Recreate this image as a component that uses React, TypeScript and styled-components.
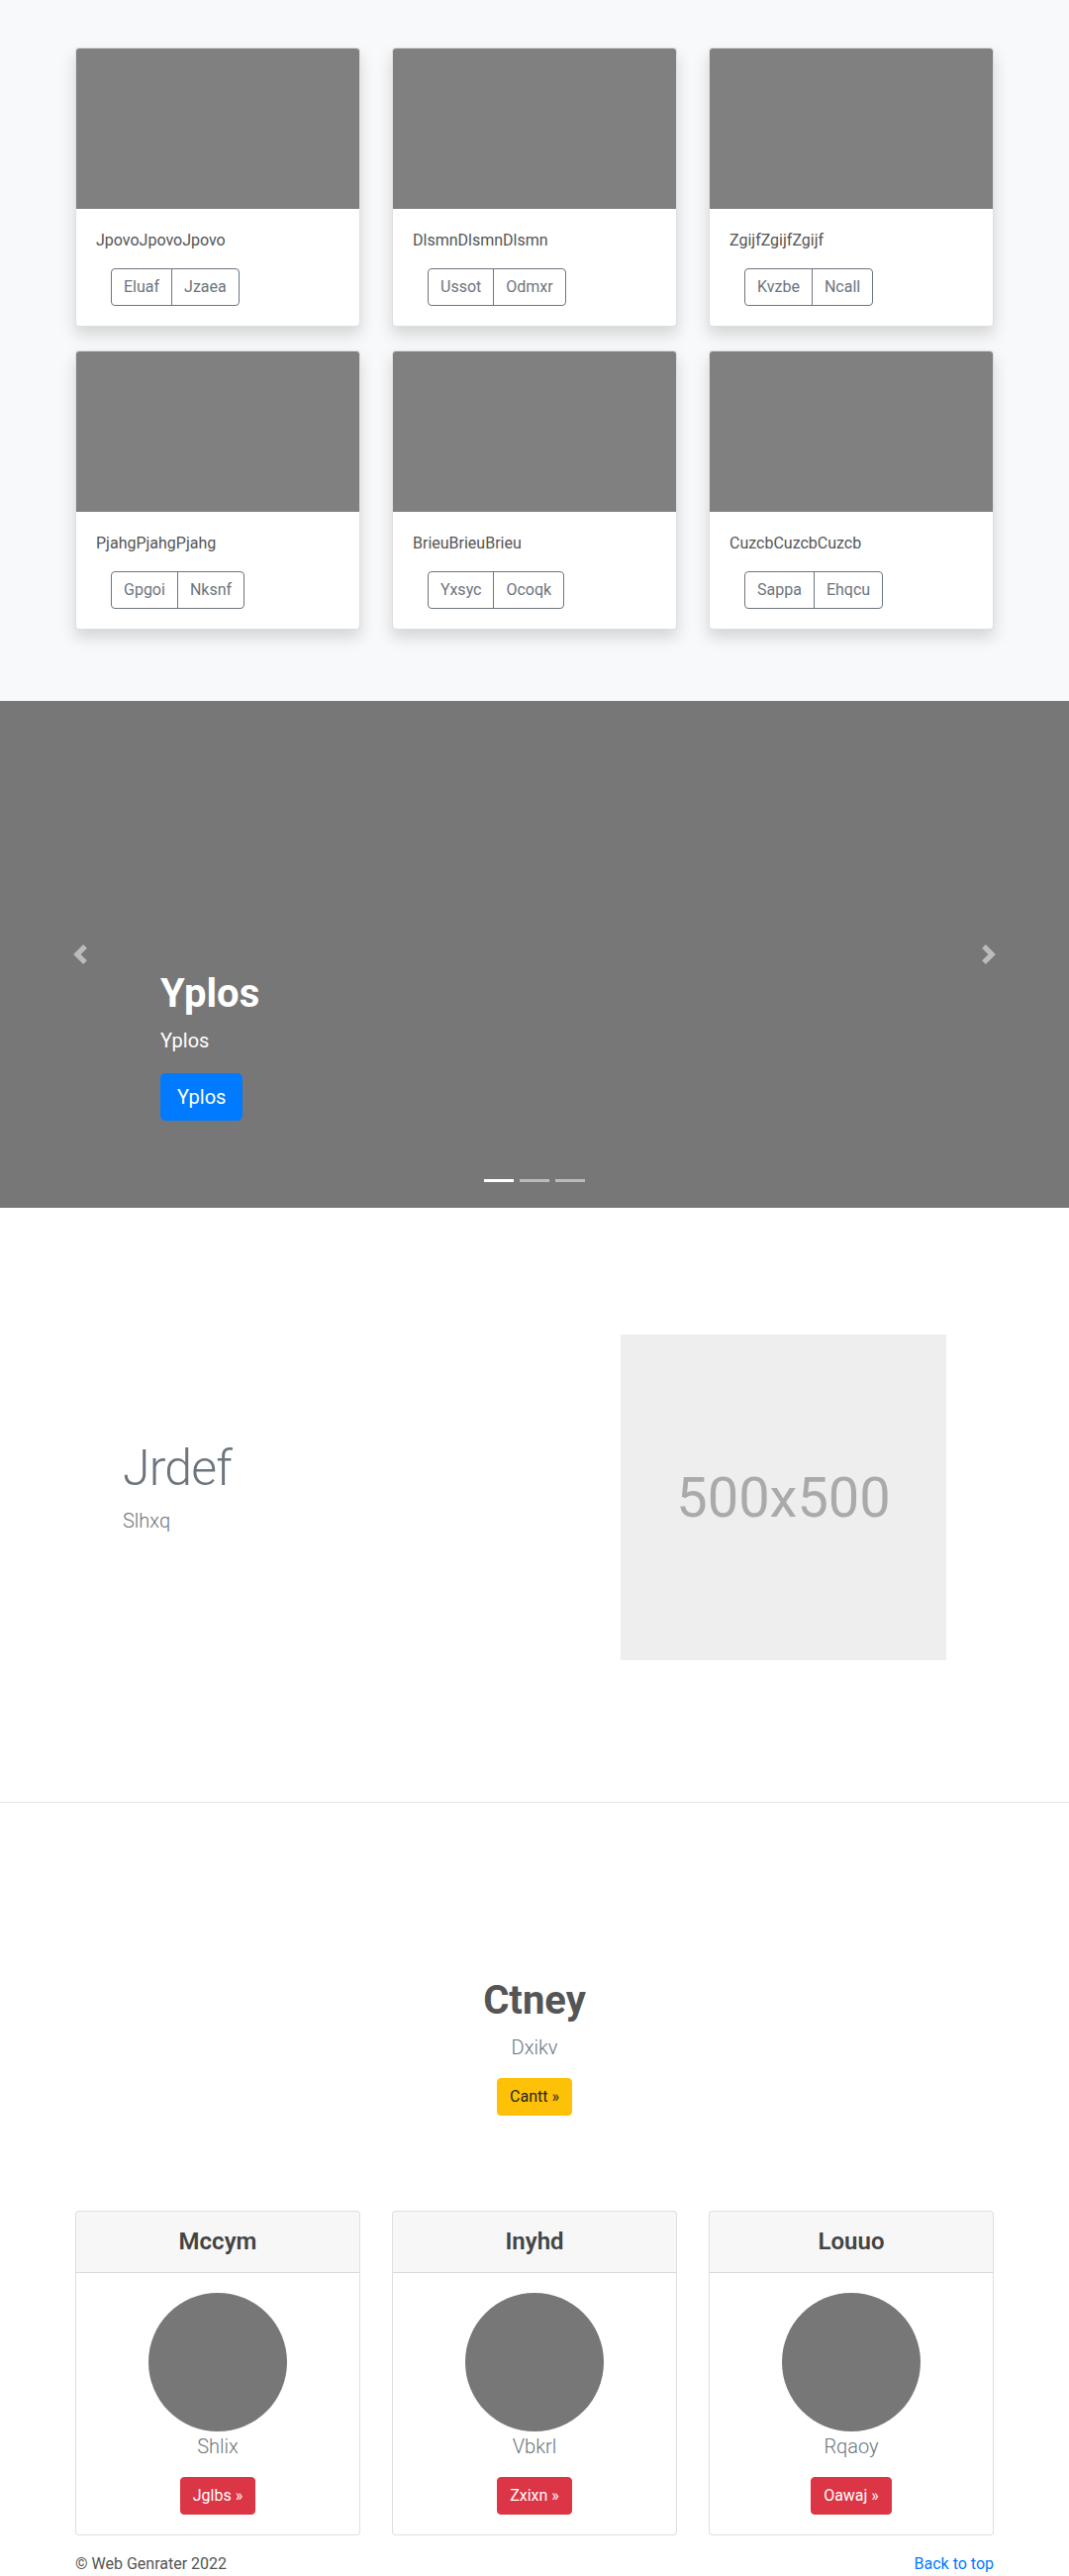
import React from "react";
import styled, { createGlobalStyle } from "styled-components";

const GlobalStyle = createGlobalStyle`
  * { box-sizing: border-box; }
  html, body { margin: 0; padding: 0; }
  body {
    font-family: Roboto, "Open Sans", "Liberation Sans", Arial, sans-serif;
    font-size: 16px;
    line-height: 1.5;
    color: #555;
    background: #fff;
  }
`;

const Page = styled.main`
  width: 1080px;
`;

const Container = styled.div`
  width: 928px;
  margin: 0 auto;
`;

/* ---------- Album ---------- */
const Album = styled.section`
  background: #f8f9fa;
  padding: 48px 0 72px;
`;

const CardGrid = styled.div`
  display: grid;
  grid-template-columns: repeat(3, 1fr);
  gap: 24px 32px;
`;

const AlbumCard = styled.div`
  background: #fff;
  border: 1px solid rgba(0, 0, 0, 0.125);
  border-radius: 4px;
  overflow: hidden;
  box-shadow: 0 8px 16px rgba(0, 0, 0, 0.15);
`;

const Thumb = styled.div`
  height: 162px;
  background: #808080;
`;

const CardBody = styled.div`
  padding: 20px;
`;

const CardText = styled.p`
  margin: 0 0 16px;
  color: #555;
`;

const BtnGroup = styled.div`
  display: inline-flex;
  margin-left: 15px;
`;

const OutlineBtn = styled.button`
  font: inherit;
  font-size: 16px;
  line-height: 24px;
  padding: 6px 12px;
  border: 1px solid #6c757d;
  color: #6c757d;
  background: transparent;
  &:first-child { border-radius: 4px 0 0 4px; }
  &:last-child { border-radius: 0 4px 4px 0; margin-left: -1px; }
`;

/* ---------- Carousel ---------- */
const Carousel = styled.section`
  position: relative;
  height: 512px;
  background: #777;
  display: flex;
  align-items: flex-end;
  padding: 0 15% 88px;
`;

const Caption = styled.div`
  color: #fff;
`;

const CaptionTitle = styled.h1`
  font-size: 40px;
  font-weight: 700;
  line-height: 1.2;
  margin: 0 0 8px;
`;

const CaptionText = styled.p`
  font-size: 20px;
  line-height: 30px;
  margin: 0 0 18px;
`;

const PrimaryBtnLg = styled.a`
  display: inline-block;
  background: #007bff;
  border: 1px solid #007bff;
  color: #fff;
  font-size: 20px;
  line-height: 30px;
  padding: 8px 16px;
  border-radius: 5px;
  text-decoration: none;
`;

const Control = styled.a<{ $side: "left" | "right" }>`
  position: absolute;
  top: 0;
  bottom: 0;
  ${(p) => p.$side}: 0;
  width: 15%;
  display: flex;
  align-items: center;
  justify-content: center;
  opacity: 0.5;
`;

const Indicators = styled.ol`
  position: absolute;
  left: 0;
  right: 0;
  bottom: 26px;
  display: flex;
  justify-content: center;
  margin: 0;
  padding: 0;
  list-style: none;
`;

const Indicator = styled.li<{ $active?: boolean }>`
  width: 30px;
  height: 3px;
  margin: 0 3px;
  background: #fff;
  opacity: ${(p) => (p.$active ? 1 : 0.5)};
`;

/* ---------- Featurette ---------- */
const Featurette = styled.section`
  padding: 128px 0 143px;
`;

const FeatRow = styled.div`
  width: 928px;
  margin: 0 auto;
  padding: 0 48px;
  display: grid;
  grid-template-columns: 1fr 329px;
  align-items: center;
`;

const FeatHeading = styled.h2`
  font-size: 50px;
  font-weight: 300;
  line-height: 1;
  letter-spacing: -0.8px;
  color: #6c757d;
  margin: 0 0 13px;
`;

const Lead = styled.p`
  font-size: 20px;
  font-weight: 300;
  line-height: 30px;
  color: #6c757d;
  margin: 0 0 16px;
`;

const Placeholder = styled.div`
  width: 329px;
  height: 329px;
  background: #eee;
  color: #aaa;
  font-size: 56px;
  display: flex;
  align-items: center;
  justify-content: center;
`;

const Divider = styled.hr`
  margin: 0;
  border: 0;
  border-top: 1px solid rgba(0, 0, 0, 0.1);
`;

/* ---------- Hero ---------- */
const Hero = styled.section`
  padding: 176px 0 96px;
  text-align: center;
`;

const HeroTitle = styled.h1`
  font-size: 40px;
  font-weight: 700;
  line-height: 1.2;
  color: #555;
  margin: 0 0 8px;
`;

const SolidBtn = styled.a<{ $bg: string; $fg: string }>`
  display: inline-block;
  background: ${(p) => p.$bg};
  border: 1px solid ${(p) => p.$bg};
  color: ${(p) => p.$fg};
  font-size: 16px;
  line-height: 24px;
  padding: 6px 12px;
  border-radius: 4px;
  text-decoration: none;
`;

/* ---------- Pricing-like cards ---------- */
const PriceGrid = styled.div`
  display: grid;
  grid-template-columns: repeat(3, 1fr);
  gap: 32px;
`;

const PriceCard = styled.div`
  background: #fff;
  border: 1px solid rgba(0, 0, 0, 0.125);
  border-radius: 4px;
  overflow: hidden;
`;

const PriceHeader = styled.div`
  background: rgba(0, 0, 0, 0.03);
  border-bottom: 1px solid rgba(0, 0, 0, 0.125);
  padding: 16px 20px;
  text-align: center;
`;

const PriceTitle = styled.h4`
  font-size: 24px;
  font-weight: 600;
  line-height: 1.2;
  color: #444;
  margin: 0;
`;

const PriceBody = styled.div`
  padding: 20px;
  display: flex;
  flex-direction: column;
  align-items: center;
`;

const Avatar = styled.div`
  width: 140px;
  height: 140px;
  border-radius: 50%;
  background: #777;
`;

/* ---------- Footer ---------- */
const Footer = styled.footer`
  width: 928px;
  margin: 0 auto;
  padding-top: 17px;
  display: flex;
  justify-content: space-between;
`;

const FooterText = styled.p`
  margin: 0 0 16px;
  color: #555;
`;

const FooterLink = styled.a`
  color: #007bff;
  text-decoration: none;
`;

const Chevron = ({ dir }: { dir: "prev" | "next" }) => (
  <svg width="20" height="20" viewBox="0 0 8 8" fill="#fff">
    <path
      d={
        dir === "prev"
          ? "M5.25 0l-4 4 4 4 1.5-1.5L4.25 4l2.5-2.5L5.25 0z"
          : "M2.75 0l-1.5 1.5L3.75 4l-2.5 2.5L2.75 8l4-4-4-4z"
      }
    />
  </svg>
);

const albums = [
  { title: "JpovoJpovoJpovo", a: "Eluaf", b: "Jzaea" },
  { title: "DlsmnDlsmnDlsmn", a: "Ussot", b: "Odmxr" },
  { title: "ZgijfZgijfZgijf", a: "Kvzbe", b: "Ncall" },
  { title: "PjahgPjahgPjahg", a: "Gpgoi", b: "Nksnf" },
  { title: "BrieuBrieuBrieu", a: "Yxsyc", b: "Ocoqk" },
  { title: "CuzcbCuzcbCuzcb", a: "Sappa", b: "Ehqcu" },
];

const people = [
  { name: "Mccym", text: "Shlix", btn: "Jglbs" },
  { name: "Inyhd", text: "Vbkrl", btn: "Zxixn" },
  { name: "Louuo", text: "Rqaoy", btn: "Oawaj" },
];

export default function App() {
  return (
    <Page>
      <GlobalStyle />
      <Album>
        <Container>
          <CardGrid>
            {albums.map((c) => (
              <AlbumCard key={c.title}>
                <Thumb />
                <CardBody>
                  <CardText>{c.title}</CardText>
                  <BtnGroup>
                    <OutlineBtn>{c.a}</OutlineBtn>
                    <OutlineBtn>{c.b}</OutlineBtn>
                  </BtnGroup>
                </CardBody>
              </AlbumCard>
            ))}
          </CardGrid>
        </Container>
      </Album>

      <Carousel>
        <Caption>
          <CaptionTitle>Yplos</CaptionTitle>
          <CaptionText>Yplos</CaptionText>
          <PrimaryBtnLg href="#">Yplos</PrimaryBtnLg>
        </Caption>
        <Control $side="left" href="#">
          <Chevron dir="prev" />
        </Control>
        <Control $side="right" href="#">
          <Chevron dir="next" />
        </Control>
        <Indicators>
          <Indicator $active />
          <Indicator />
          <Indicator />
        </Indicators>
      </Carousel>

      <Featurette>
        <FeatRow>
          <div>
            <FeatHeading>Jrdef</FeatHeading>
            <Lead>Slhxq</Lead>
          </div>
          <Placeholder>500x500</Placeholder>
        </FeatRow>
      </Featurette>
      <Divider />

      <Hero>
        <HeroTitle>Ctney</HeroTitle>
        <Lead>Dxikv</Lead>
        <SolidBtn $bg="#ffc107" $fg="#212529" href="#">
          Cantt »
        </SolidBtn>
      </Hero>

      <Container>
        <PriceGrid>
          {people.map((p) => (
            <PriceCard key={p.name}>
              <PriceHeader>
                <PriceTitle>{p.name}</PriceTitle>
              </PriceHeader>
              <PriceBody>
                <Avatar />
                <Lead>{p.text}</Lead>
                <SolidBtn $bg="#dc3545" $fg="#fff" href="#">
                  {p.btn} »
                </SolidBtn>
              </PriceBody>
            </PriceCard>
          ))}
        </PriceGrid>
      </Container>

      <Footer>
        <FooterText>© Web Genrater 2022</FooterText>
        <FooterText>
          <FooterLink href="#">Back to top</FooterLink>
        </FooterText>
      </Footer>
    </Page>
  );
}
